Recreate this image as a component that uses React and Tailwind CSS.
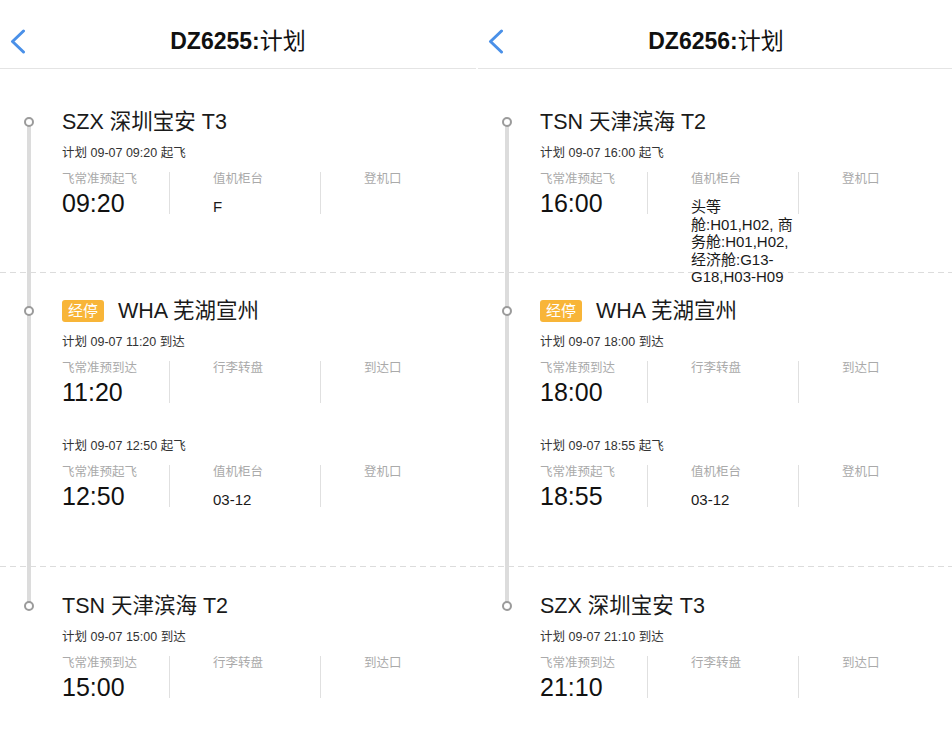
import React from "react";

const FONT = "font-['Liberation_Sans','Noto_Sans_CJK_SC',sans-serif]";

function Dot() {
  return (
    <div className="w-[62px] shrink-0 flex items-center">
      <div className="ml-[24px] w-[10px] h-[10px] rounded-full border-2 border-[#9b9b9b] bg-white relative z-10" />
    </div>
  );
}

function StationRow({ name, badge }) {
  return (
    <div className="flex items-center h-[28px]">
      <Dot />
      {badge && (
        <span className="mr-[14px] h-[22px] px-[6px] rounded-[3px] bg-[#f8b538] text-white text-[15px] leading-[22px]">
          {badge}
        </span>
      )}
      <span className="text-[21.5px] text-[#1a1a1a] leading-[28px] whitespace-nowrap">{name}</span>
    </div>
  );
}

function Sub({ children, className = "" }) {
  return (
    <div className={`pl-[62px] text-[12.5px] leading-[18px] text-[#333] ${className}`}>{children}</div>
  );
}

function Cells({ labels, time, value, className = "" }) {
  return (
    <div className={`pl-[62px] flex h-[42px] ${className}`}>
      <div className="w-[107px] shrink-0">
        <div className="text-[12.5px] leading-[14px] text-[#aaa] whitespace-nowrap">{labels[0]}</div>
        <div className="mt-[5px] text-[25px] leading-[25px] text-[#111]">{time}</div>
      </div>
      <div className="w-[151px] shrink-0 border-l border-[#e0e0e0] pl-[43px]">
        <div className="text-[12.5px] leading-[14px] text-[#aaa] whitespace-nowrap">{labels[1]}</div>
        {value && (
          <div className="mt-[12px] text-[15px] leading-[17.5px] text-[#1a1a1a] relative z-10">{value}</div>
        )}
      </div>
      <div className="w-[151px] shrink-0 border-l border-[#e0e0e0] pl-[43px]">
        <div className="text-[12.5px] leading-[14px] text-[#aaa] whitespace-nowrap">{labels[2]}</div>
      </div>
    </div>
  );
}

function Dashed() {
  return (
    <div className="h-px w-full bg-[repeating-linear-gradient(90deg,#dcdcdc_0_6px,transparent_6px_10px)]" />
  );
}

const DEP = ["飞常准预起飞", "值机柜台", "登机口"];
const ARR = ["飞常准预到达", "行李转盘", "到达口"];

function Panel({ flight, d }) {
  return (
    <div className="w-[476px] shrink-0 bg-white">
      <div className="h-[69px] pt-[14px] border-b border-[#e4e4e4] flex items-center relative">
        <svg className="absolute left-[9px] top-[29px]" width="17" height="25" viewBox="0 0 17 25" fill="none">
          <path d="M14.5 2 L3.5 12.5 L14.5 23" stroke="#4a90e8" strokeWidth="3" strokeLinecap="round" strokeLinejoin="round" />
        </svg>
        <div className="flex-1 text-center text-[23px] text-[#111]">
          <span className="font-bold">{flight}:</span>
          <span>计划</span>
        </div>
      </div>
      <div className="relative">
        <div className="absolute left-[27px] top-[51px] w-[4px] h-[486px] bg-[#dcdcdc]" />
        <div className="h-[203px] pt-[39px] relative">
          <StationRow name={d.s1} />
          <Sub className="mt-[8px]">{d.sub1}</Sub>
          <Cells className="mt-[10px]" labels={DEP} time={d.t1} value={d.v1} />
        </div>
        <Dashed />
        <div className="h-[293px] pt-[24px] relative">
          <StationRow name="WHA 芜湖宣州" badge="经停" />
          <Sub className="mt-[8px]">{d.sub2}</Sub>
          <Cells className="mt-[10px]" labels={ARR} time={d.t2} />
          <Sub className="mt-[34px]">{d.sub3}</Sub>
          <Cells className="mt-[10px]" labels={DEP} time={d.t3} value="03-12" />
        </div>
        <Dashed />
        <div className="h-[180px] pt-[25px] relative">
          <StationRow name={d.s3} />
          <Sub className="mt-[8px]">{d.sub4}</Sub>
          <Cells className="mt-[10px]" labels={ARR} time={d.t4} />
        </div>
      </div>
    </div>
  );
}

export default function App() {
  const a = {
    s1: "SZX 深圳宝安 T3",
    sub1: "计划 09-07 09:20 起飞",
    t1: "09:20",
    v1: "F",
    sub2: "计划 09-07 11:20 到达",
    t2: "11:20",
    sub3: "计划 09-07 12:50 起飞",
    t3: "12:50",
    s3: "TSN 天津滨海 T2",
    sub4: "计划 09-07 15:00 到达",
    t4: "15:00",
  };
  const b = {
    s1: "TSN 天津滨海 T2",
    sub1: "计划 09-07 16:00 起飞",
    t1: "16:00",
    v1: "头等舱:H01,H02, 商务舱:H01,H02, 经济舱:G13-G18,H03-H09",
    sub2: "计划 09-07 18:00 到达",
    t2: "18:00",
    sub3: "计划 09-07 18:55 起飞",
    t3: "18:55",
    s3: "SZX 深圳宝安 T3",
    sub4: "计划 09-07 21:10 到达",
    t4: "21:10",
  };
  return (
    <div className={`${FONT} w-[952px] h-[747px] overflow-hidden bg-white flex gap-[2px]`}>
      <Panel flight="DZ6255" d={a} />
      <Panel flight="DZ6256" d={b} />
    </div>
  );
}
